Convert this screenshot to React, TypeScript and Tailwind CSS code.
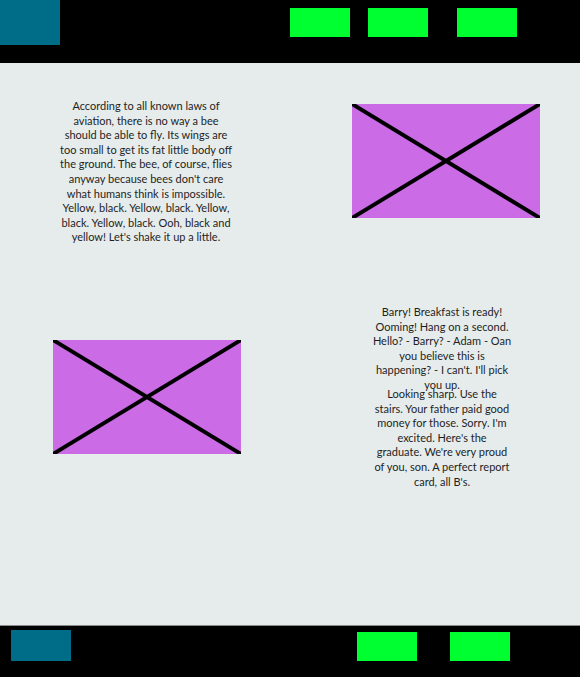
import React from "react";

const Img = () => (
  <svg width="188" height="114" viewBox="0 0 188 114" className="block">
    <rect x="0" y="0" width="188" height="114" fill="#cb6be6" />
    <line x1="0" y1="0" x2="188" y2="114" stroke="#000" strokeWidth="4" />
    <line x1="188" y1="0" x2="0" y2="114" stroke="#000" strokeWidth="4" />
  </svg>
);

export default function App() {
  const font = { fontFamily: "Lato, 'Open Sans', sans-serif" };
  return (
    <div className="w-[580px] h-[677px] flex flex-col overflow-hidden" style={font}>
      <header className="h-[63px] bg-black flex items-start shrink-0">
        <div className="w-[60px] h-[45px] bg-[#006d88]" />
        <div className="ml-[230px] mt-[8px] w-[60px] h-[29px] bg-[#00ff30]" />
        <div className="ml-[18px] mt-[8px] w-[60px] h-[29px] bg-[#00ff30]" />
        <div className="ml-[29px] mt-[8px] w-[60px] h-[29px] bg-[#00ff30]" />
      </header>
      <main className="flex-1 bg-[#e6ecec] flex flex-col text-[11px] leading-[14.6px] text-[#1e1e1e]">
        <div className="h-[242px] pt-[36px] flex items-start shrink-0">
          <div className="w-[292px] flex justify-center">
            <p className="text-center whitespace-nowrap">
              According to all known laws of<br />
              aviation, there is no way a bee<br />
              should be able to fly. Its wings are<br />
              too small to get its fat little body off<br />
              the ground. The bee, of course, flies<br />
              anyway because bees don't care<br />
              what humans think is impossible.<br />
              Yellow, black. Yellow, black. Yellow,<br />
              black. Yellow, black. Ooh, black and<br />
              yellow! Let's shake it up a little.
            </p>
          </div>
          <div className="ml-[60px] mt-[5px]">
            <Img />
          </div>
        </div>
        <div className="flex items-start">
          <div className="ml-[53px] mt-[35px]">
            <Img />
          </div>
          <div className="ml-[126px] w-[150px] flex flex-col items-center text-center whitespace-nowrap">
            <p className="h-[82px]">
              Barry! Breakfast is ready!<br />
              Ooming! Hang on a second.<br />
              Hello? - Barry? - Adam - Oan<br />
              you believe this is<br />
              happening? - I can't. I'll pick<br />
              you up.
            </p>
            <p>
              Looking sharp. Use the<br />
              stairs. Your father paid good<br />
              money for those. Sorry. I'm<br />
              excited. Here's the<br />
              graduate. We're very proud<br />
              of you, son. A perfect report<br />
              card, all B's.
            </p>
          </div>
        </div>
      </main>
      <footer className="h-[52px] bg-black border-t border-[#8a8a8a] flex items-start shrink-0">
        <div className="ml-[11px] mt-[4px] w-[60px] h-[31px] bg-[#006d88]" />
        <div className="ml-[286px] mt-[6px] w-[60px] h-[29px] bg-[#00ff30]" />
        <div className="ml-[33px] mt-[6px] w-[60px] h-[29px] bg-[#00ff30]" />
      </footer>
    </div>
  );
}
